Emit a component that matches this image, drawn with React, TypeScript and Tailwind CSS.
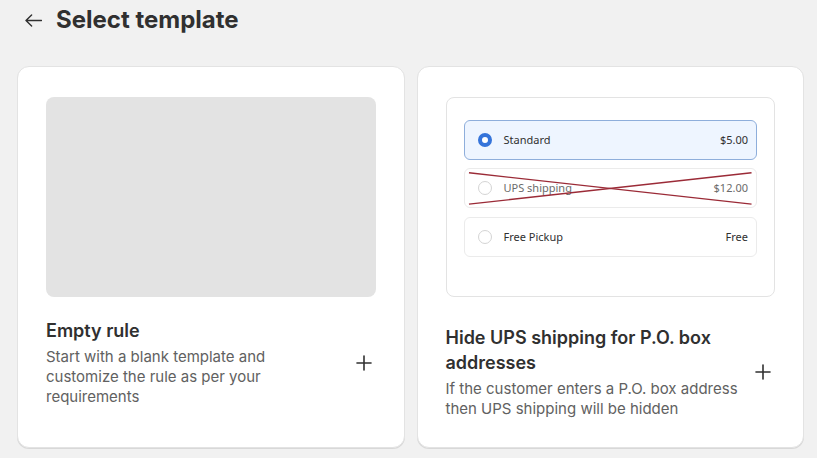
import { Plus } from "lucide-react";

const ink = "text-[#303030]";

const ShippingRow = ({
  label,
  price,
  selected,
  muted,
  crossed,
}: {
  label: string;
  price: string;
  selected?: boolean;
  muted?: boolean;
  crossed?: boolean;
}) => (
  <div
    className={`relative flex h-10 items-center rounded-md border pl-[13px] pr-2 text-[11px] ${
      selected
        ? "border-[#8eaedb] bg-[#eef5ff]"
        : "border-[#ebebeb] bg-white"
    } ${muted ? "text-[#6b6b6b]" : "text-[#303030]"}`}
  >
    {selected ? (
      <span className="h-[14px] w-[14px] rounded-full border-[4px] border-[#3574da] bg-white" />
    ) : (
      <span className="h-[14px] w-[14px] rounded-full border border-[#d4d4d4] bg-white" />
    )}
    <span className="ml-3">{label}</span>
    <span className="ml-auto">{price}</span>
    {crossed && (
      <svg
        className="pointer-events-none absolute inset-0 h-full w-full"
        viewBox="0 0 294 40"
        preserveAspectRatio="none"
      >
        <line x1="4" y1="4" x2="289" y2="37" stroke="#9b2b37" strokeWidth="1.5" />
        <line x1="4" y1="37" x2="289" y2="4" stroke="#9b2b37" strokeWidth="1.5" />
      </svg>
    )}
  </div>
);

const TemplateCard = ({
  preview,
  title,
  description,
  textTop,
}: {
  preview: React.ReactNode;
  title: string;
  description: string;
  textTop: string;
}) => (
  <div className="flex flex-col rounded-xl border border-[#e3e3e3] bg-white px-7 pb-[28px] pt-[30px] shadow-[0_1px_0_0_rgba(0,0,0,0.10)]">
    {preview}
    <div className={`flex items-center ${textTop}`}>
      <div className="w-[296px]">
        <h2 className={`text-[18px] font-semibold leading-[25px] ${ink}`}>{title}</h2>
        <p className="mt-1 text-[15px] leading-5 text-[#616161]">{description}</p>
      </div>
      <Plus className={`ml-auto h-6 w-6 ${ink}`} strokeWidth={1.6} />
    </div>
  </div>
);

export default function App() {
  return (
    <div
      className="min-h-screen bg-[#f1f1f1] pt-[6px]"
      style={{ fontFamily: "Inter, 'Liberation Sans', sans-serif" }}
    >
      {/* Encabezado */}
      <div className="flex h-[28px] items-center pl-[25px]">
        <svg width="17" height="13" viewBox="0 0 17 13" fill="none" className="text-[#303030]">
          <path
            d="M16.5 6.5H1.2M6.6 1L1 6.5L6.6 12"
            stroke="currentColor"
            strokeWidth="1.4"
            strokeLinecap="round"
            strokeLinejoin="round"
          />
        </svg>
        <h1 className={`ml-[14px] text-[24px] font-bold leading-[28px] ${ink}`}>
          Select template
        </h1>
      </div>

      {/* Plantillas */}
      <div className="ml-[17px] mt-[32px] grid w-[787px] grid-cols-2 gap-3 pb-[11px]">
        <TemplateCard
          preview={<div className="h-[200px] rounded-lg bg-[#e3e3e3]" />}
          title="Empty rule"
          description="Start with a blank template and customize the rule as per your requirements"
          textTop="mt-[21px]"
        />
        <TemplateCard
          preview={
            <div
              className="h-[200px] rounded-lg border border-[#e3e3e3] px-[17px] pt-[22px]"
              style={{ fontFamily: "'Noto Sans', 'Open Sans', sans-serif" }}
            >
              <div className="flex flex-col gap-2">
                <ShippingRow label="Standard" price="$5.00" selected />
                <ShippingRow label="UPS shipping" price="$12.00" muted crossed />
                <div className="pt-px">
                  <ShippingRow label="Free Pickup" price="Free" />
                </div>
              </div>
            </div>
          }
          title="Hide UPS shipping for P.O. box addresses"
          description="If the customer enters a P.O. box address then UPS shipping will be hidden"
          textTop="mt-[28px]"
        />
      </div>
    </div>
  );
}
